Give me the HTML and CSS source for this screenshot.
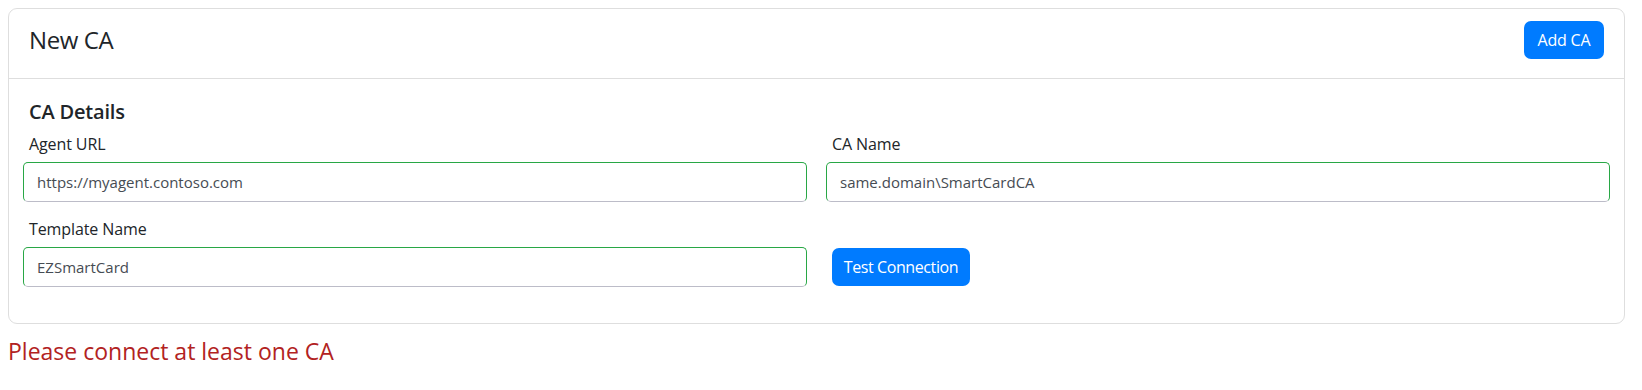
FILE: index.html
```html
<!DOCTYPE html>
<html lang="en">
<head>
<meta charset="utf-8">
<title>New CA</title>
<link rel="stylesheet" href="styles.css">
</head>
<body>
<div class="card">
  <div class="card-header">
    <h4 class="card-title">New CA</h4>
    <button class="btn btn-primary" type="button">Add CA</button>
  </div>
  <div class="card-body">
    <h5 class="section-title">CA Details</h5>
    <div class="form-grid">
      <div class="field">
        <label class="field-label">Agent URL</label>
        <input class="field-input" type="text" value="https://myagent.contoso.com">
      </div>
      <div class="field">
        <label class="field-label">CA Name</label>
        <input class="field-input" type="text" value="same.domain\SmartCardCA">
      </div>
      <div class="field">
        <label class="field-label">Template Name</label>
        <input class="field-input" type="text" value="EZSmartCard">
      </div>
      <div class="field field-action">
        <button class="btn btn-primary btn-test" type="button">Test Connection</button>
      </div>
    </div>
  </div>
</div>
<p class="error-text">Please connect at least one CA</p>
</body>
</html>
```
FILE: styles.css
```css
* { box-sizing: border-box; }
html, body { background: #ffffff; }
body {
  margin: 8px;
  font-family: "Open Sans", "Liberation Sans", sans-serif;
  color: #212529;
}
.card {
  width: 1617px;
  border: 1px solid #dedede;
  border-radius: 9px;
  background: #fff;
}
.card-header {
  display: flex;
  align-items: center;
  justify-content: space-between;
  padding: 12px 20px 19px 20px;
  border-bottom: 1px solid #dedede;
}
.card-title {
  margin: 0;
  font-size: 24px;
  font-weight: 400;
  line-height: 30px;
  letter-spacing: -0.4px;
}
.btn {
  font-family: inherit;
  border: none;
  border-radius: 7px;
  cursor: pointer;
}
.btn-primary {
  background: #007bff;
  color: #fff;
  font-size: 16px;
  height: 38px;
  padding: 0 13px;
  line-height: 38px;
  letter-spacing: -0.2px;
}
.card-header .btn-primary { width: 80px; padding: 0; }
.card-body {
  padding: 21px 14px 36px 14px;
}
.section-title {
  margin: 0 0 8px 0;
  padding-left: 6px;
  font-size: 20px;
  font-weight: 600;
  line-height: 24px;
  letter-spacing: -0.2px;
}
.form-grid {
  display: grid;
  grid-template-columns: 784px 784px;
  column-gap: 19px;
  row-gap: 15px;
}
.field {
  display: flex;
  flex-direction: column;
}
.field-label {
  display: block;
  padding-left: 6px;
  margin-bottom: 6px;
  font-size: 16px;
  line-height: 24px;
  letter-spacing: -0.1px;
}
.field-input {
  height: 40px;
  width: 100%;
  border: 1px solid #28a745;
  border-bottom-color: #bcbcc8;
  border-radius: 5px;
  padding: 0 13px;
  font-family: inherit;
  font-size: 15px;
  color: #464c53;
  outline: none;
  background: #fff;
}
.field-action {
  justify-content: flex-end;
  align-items: flex-start;
  padding-bottom: 1px;
}
.btn-test {
  margin-left: 6px;
  width: 138px;
  padding: 0;
  letter-spacing: -0.4px;
}
.error-text {
  margin: 12px 0 0 0;
  font-size: 23px;
  line-height: 30px;
  color: #b22222;
}
```
